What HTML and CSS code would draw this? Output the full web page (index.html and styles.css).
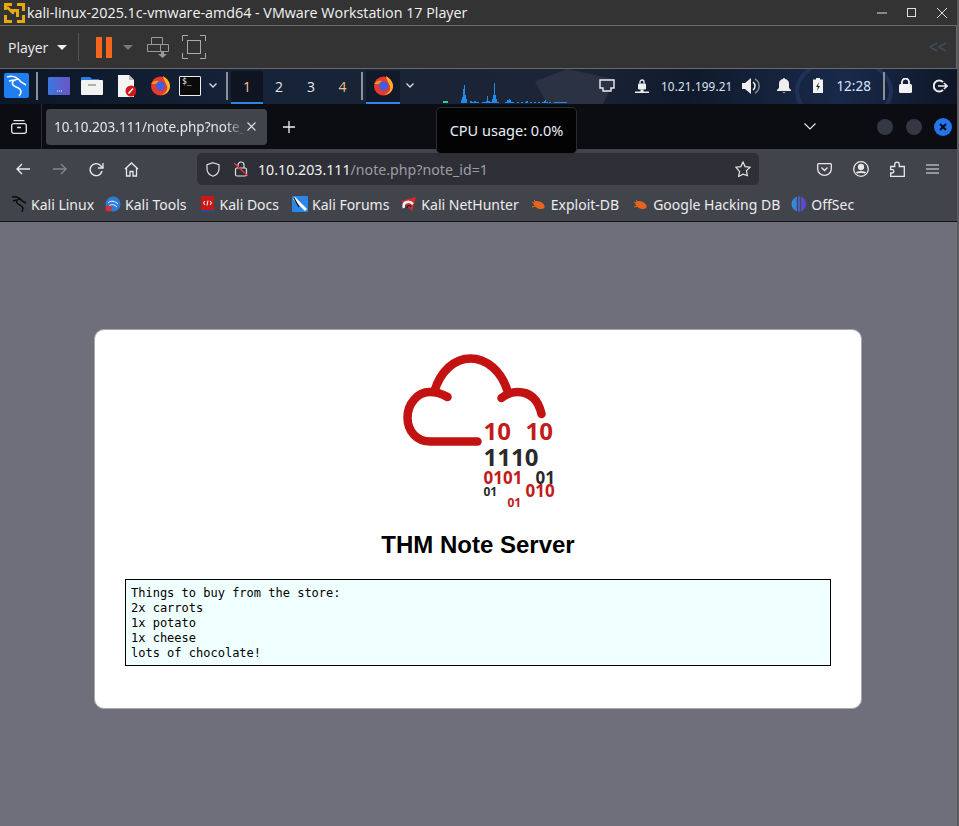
FILE: index.html
```html
<!DOCTYPE html>
<html lang="en">
<head>
<meta charset="utf-8">
<title>THM Note Server</title>
<link rel="stylesheet" href="styles.css">
</head>
<body>
<div class="shell">
  <header class="titlebar">
    <svg class="vm-logo" viewBox="0 0 24 22" width="24" height="22"><path d="M1 1h8v3H4v4H1zM14 1h8v8h-3V4h-5zM1 13h3v5h5v3H1zM8 7h8v8h-3v-5H8zM19 13h3v8h-8v-3h5z" fill="#e8a90c"/><path d="M4 5l6 6M10 8v4" stroke="#e8a90c" stroke-width="2.5"/></svg>
    <span class="title-text">kali-linux-2025.1c-vmware-amd64 - VMware Workstation 17 Player</span>
    <div class="win-controls">
      <svg width="10" height="2" viewBox="0 0 10 2"><path d="M0 1h10" stroke="#ddd"/></svg>
      <svg width="10" height="10" viewBox="0 0 10 10"><rect x=".5" y=".5" width="8" height="8" fill="none" stroke="#ddd"/></svg>
      <svg width="10" height="10" viewBox="0 0 10 10"><path d="M0 0l10 10M10 0L0 10" stroke="#ddd"/></svg>
    </div>
  </header>

  <div class="toolbar">
    <span class="player">Player</span>
    <span class="caret"></span>
    <span class="tb-sep"></span>
    <span class="pause"><i></i><i></i></span>
    <span class="caret caret-dim"></span>
    <svg class="tb-send" width="22" height="21" viewBox="0 0 22 21" fill="none" stroke="#999"><path d="M4.500 .5h11v7h-11zM.5 7.500h13v7H.5zM13.500 7.500h8v7h-8z"/><path d="M14 15v2h-3l4.500 4 4.500-4h-3v-2z" fill="#999" stroke="none"/></svg>
    <svg class="tb-full" width="24" height="24" viewBox="0 0 24 24" fill="none" stroke="#aaa"><path d="M.5 6V.5H6M18 .5h5.500V6M.5 18v5.500H6M18 23.500h5.500V18"/><rect x="5.500" y="5.500" width="13" height="13"/></svg>
    <svg class="tb-hide" width="18" height="10" viewBox="0 0 18 10" fill="none" stroke="#3d4c5c" stroke-width="1.500"><path d="M8 1L1 5l7 4M17 1l-7 4 7 4"/></svg>
  </div>

  <nav class="panel">
    <span class="kali-btn">
      <svg width="24" height="24" viewBox="0 0 24 24" fill="none" stroke="#fff" stroke-width="1.500"><path d="M3 4c6-2 11 1 14 5l5 3M15 6c-5 0-8 3-6 6 2 3 8 2 8 7 0 2-1 3-2 4M5 8c3-1 5-1 7-1"/></svg>
    </span>
    <span class="panel-sep sep-a"></span>
    <svg class="p-apps" width="22" height="18" viewBox="0 0 22 18"><defs><linearGradient id="ga" x1="0" x2="1"><stop offset="0" stop-color="#3b78e0"/><stop offset="1" stop-color="#6a55c4"/></linearGradient></defs><rect width="22" height="18" rx="1" fill="url(#ga)"/><path d="M9 14h1M11 14h1M13 14h1" stroke="#fff"/></svg>
    <svg class="p-files" width="22" height="19" viewBox="0 0 22 19"><path d="M0 2a1 1 0 011-1h8l2 2h7v3H0z" fill="#2a7de1"/><rect y="4" width="22" height="15" rx="1" fill="#f2f2f2"/><path d="M7 9h8" stroke="#999" stroke-width="1.500"/></svg>
    <svg class="p-doc" width="18" height="22" viewBox="0 0 18 22"><path d="M0 0h11l5 5v17H0z" fill="#f4f4f4"/><path d="M11 0l5 5h-5z" fill="#bbb"/><circle cx="13" cy="16" r="5.500" fill="#d01818"/><path d="M10.500 18.500l4.500-5" stroke="#fff" stroke-width="1.500"/></svg>
    <svg class="p-fox" width="21" height="21" viewBox="0 0 21 21"><use href="#fox"/></svg>
    <span class="p-term">$_</span>
    <svg class="chev p-chev1" width="8" height="5" viewBox="0 0 8 5"><path d="M.5.500L4 4 7.500.500" fill="none" stroke="#ddd" stroke-width="1.300"/></svg>
    <span class="panel-sep sep-b"></span>
    <span class="ws ws-on">1</span>
    <span class="ws">2</span>
    <span class="ws">3</span>
    <span class="ws ws-last">4</span>
    <span class="panel-sep sep-c"></span>
    <span class="task">
      <svg width="21" height="21" viewBox="0 0 21 21">
        <defs>
          <g id="fox">
            <circle cx="10.500" cy="11" r="9.500" fill="#e8392f"/>
            <path d="M13 1c5 3 7 7 7 10 0 5-4 9-9 9 5-2 7-5 6-9-1-3-3-5-4-10z" fill="#f9b42b"/>
            <path d="M1 9c2-3 5-4 8-3l-3 3z" fill="#f7922b"/>
            <circle cx="10.500" cy="11" r="4.500" fill="#3f5ee0"/>
          </g>
        </defs>
        <use href="#fox"/>
      </svg>
    </span>
    <svg class="chev p-chev2" width="8" height="5" viewBox="0 0 8 5"><path d="M.5.500L4 4 7.500.500" fill="none" stroke="#ddd" stroke-width="1.300"/></svg>
    <svg class="graph" width="150" height="20" viewBox="0 0 150 20" fill="#1f8cf0">
      <rect x="4" y="18" width="5" height="2" fill="#19d6a0"/>
      <path d="M22 20v-3h1v-3h1V6h1V2h1v10h1v4h1v4zM31 20v-2h2v1h2v-1h2v1h3v1zM43 20v-1h4v-1h1v-5h1v5h2v1h2v-3h1V12h1V0h1v12h1v4h1v3h2v1zM66 20v-1h2v-2h2v-1h1v1h1v2h3v1zM78 20v-1h2v1zM82 20v-1h2v1zM86 20v-1h1v-1h2v2zM91 20v-1h2v1zM95 20v-1h2v1zM99 20v-1h2v1zM103 20v-1h2v-1h1v-1h1v2h2v1zM110 20v-1h2v1zM115 20v-1h13v1z"/>
    </svg>
    <svg class="p-net" width="16" height="13" viewBox="0 0 16 13" fill="none" stroke="#eee" stroke-width="1.400"><path d="M1 1h14v8h-3v3H4V9H1z"/></svg>
    <svg class="p-lock" width="14" height="14" viewBox="0 0 14 14" fill="#eee"><rect x="3" y="4.500" width="8" height="6" rx="1"/><path d="M5 4.500V3a2 2 0 014 0v1.500" fill="none" stroke="#eee" stroke-width="1.300"/><path d="M0 12.500h5.500v-2h3v2H14v1.500H0z"/></svg>
    <span class="ip">10.21.199.21</span>
    <svg class="p-vol" width="18" height="16" viewBox="0 0 18 16"><path d="M0 5h3l6-5v16l-6-5H0z" fill="#eee"/><path d="M11 4a5 5 0 010 8" fill="none" stroke="#eee" stroke-width="1.500"/><path d="M13 1a8 8 0 010 14" fill="none" stroke="#888" stroke-width="1.500"/></svg>
    <svg class="p-bell" width="14" height="15" viewBox="0 0 14 15" fill="#eee"><path d="M7 0a1 1 0 011 1 5 5 0 014 5v4l2 2v1H0v-1l2-2V6a5 5 0 014-5 1 1 0 011-1zM5.500 14h3L7 15z"/></svg>
    <svg class="p-batt" width="10" height="15" viewBox="0 0 10 15"><path d="M3 0h4v1.500h3V15H0V1.500h3z" fill="#f2f2f2"/><path d="M6 4L3 9h2l-1 4 3-5H5z" fill="#222"/></svg>
    <span class="clock">12:28</span>
    <span class="panel-sep sep-d"></span>
    <svg class="p-lock2" width="13" height="15" viewBox="0 0 13 15"><rect y="6" width="13" height="9" rx="1.500" fill="#f2f2f2"/><path d="M3 6V4a3.500 3.500 0 017 0v2" fill="none" stroke="#f2f2f2" stroke-width="1.800"/></svg>
    <svg class="p-out" width="15" height="14" viewBox="0 0 15 14" fill="none" stroke="#eee" stroke-width="2"><path d="M10 3a5.500 5.500 0 100 8"/><path d="M5 7h9M11 4l3 3-3 3" stroke-width="1.600"/></svg>
  </nav>

  <div class="tabbar">
    <svg class="tab-view" width="16" height="14" viewBox="0 0 16 14" fill="none" stroke="#e6e6e6" stroke-width="1.300"><rect x=".7" y="3.700" width="14.600" height="9.600" rx="2"/><path d="M2.500.7h11M6 7.500h4"/></svg>
    <span class="tab-sep"></span>
    <div class="tab">
      <span class="tab-title">10.10.203.111/note.php?note_id=1</span>
      <svg width="9" height="9" viewBox="0 0 9 9"><path d="M.5.500l8 8M8.500.500l-8 8" stroke="#ddd" stroke-width="1.100"/></svg>
    </div>
    <svg class="tab-new" width="12" height="12" viewBox="0 0 12 12"><path d="M6 0v12M0 6h12" stroke="#f0f0f0" stroke-width="1.300"/></svg>
    <svg class="tab-list" width="12" height="7" viewBox="0 0 12 7"><path d="M.5.500L6 6 11.500.500" fill="none" stroke="#e6e6e6" stroke-width="1.200"/></svg>
    <span class="wbtn wbtn-min"></span>
    <span class="wbtn wbtn-max"></span>
    <span class="wbtn wbtn-close"><svg width="8" height="8" viewBox="0 0 8 8"><path d="M1 1l6 6M7 1L1 7" stroke="#0b0c10" stroke-width="2"/></svg></span>
  </div>

  <div class="navbar">
    <svg class="nav-back" width="14" height="12" viewBox="0 0 14 12" fill="none" stroke="#e8e8e8" stroke-width="1.400"><path d="M14 6H1M6 1L1 6l5 5"/></svg>
    <svg class="nav-fwd" width="14" height="12" viewBox="0 0 14 12" fill="none" stroke="#85878c" stroke-width="1.400"><path d="M0 6h13M8 1l5 5-5 5"/></svg>
    <svg class="nav-reload" width="15" height="15" viewBox="0 0 15 15" fill="none" stroke="#e8e8e8" stroke-width="1.400"><path d="M13 9a6 6 0 11-1.500-5.500L14 6"/><path d="M14 1v5H9" stroke-width="1.300"/></svg>
    <svg class="nav-home" width="15" height="15" viewBox="0 0 15 15" fill="none" stroke="#e8e8e8" stroke-width="1.300"><path d="M1 7l6.500-6L14 7M2.500 6v8h3.500V9.500h3V14h3.500V6"/></svg>
    <div class="urlbar">
      <svg class="url-shield" width="14" height="15" viewBox="0 0 14 15" fill="none" stroke="#e0e0e0" stroke-width="1.200"><path d="M7 .7l6 2v4c0 4-3 6.500-6 7.500C4 13.200 1 10.700 1 6.700v-4z"/></svg>
      <svg class="url-lock" width="14" height="16" viewBox="0 0 14 16" fill="none" stroke="#e0e0e0" stroke-width="1.200"><rect x="1.500" y="7" width="11" height="8" rx="1.500"/><path d="M4 7V4a3 3 0 016 0v3"/><path d="M0 2l14 13" stroke="#e0323c" stroke-width="1.400"/></svg>
      <span class="url"><b>10.10.203.111</b>/note.php?note_id=1</span>
      <svg class="url-star" width="16" height="16" viewBox="0 0 16 16" fill="none" stroke="#e6e6e6" stroke-width="1.200"><path d="M8 1l2.100 4.600 5 .6-3.700 3.400 1 4.900L8 13.100l-4.400 2.400 1-4.900L.9 6.200l5-.6z"/></svg>
    </div>
    <svg class="nav-pocket" width="15" height="13" viewBox="0 0 15 13" fill="none" stroke="#e8e8e8" stroke-width="1.300"><path d="M1.500.7h12a.8.800 0 01.8.800V6a6.800 6.300 0 01-13.600 0V1.500a.8.800 0 01.8-.800z"/><path d="M4.500 4.500l3 3 3-3"/></svg>
    <svg class="nav-user" width="16" height="16" viewBox="0 0 16 16" fill="none" stroke="#e8e8e8" stroke-width="1.300"><circle cx="8" cy="8" r="7.300"/><circle cx="8" cy="6" r="2.500" fill="#e8e8e8"/><path d="M3.500 12c1-1.500 8-1.500 9 0" stroke-width="2"/></svg>
    <svg class="nav-ext" width="15" height="16" viewBox="0 0 15 16" fill="none" stroke="#e8e8e8" stroke-width="1.300"><path d="M.7 5.500h4v-2a2.300 2.300 0 014.600 0v2h5v9.800H.7V12h1.500a1.700 1.700 0 000-3.400H.7z"/></svg>
    <svg class="nav-menu" width="13" height="10" viewBox="0 0 13 10" stroke="#e8e8e8" stroke-width="1.200"><path d="M0 1h13M0 5h13M0 9h13"/></svg>
  </div>

  <div class="bookmarks">
    <span class="bm">
      <svg width="16" height="16" viewBox="0 0 16 16" fill="none" stroke="#0c0c0c" stroke-width="1.400"><path d="M1 1c5-1 8 1 10 4l4 2M9 3C6 3 5 5 6 7s5 2 6 5c0 2-1 3-1 4M2 5c2-1 3-1 5-1"/></svg>Kali Linux</span>
    <span class="bm bm-tools">
      <svg width="16" height="16" viewBox="0 0 16 16"><circle cx="8" cy="8" r="7.500" fill="#2f7bd8"/><path d="M3 7c3-3 7-2 10 1M4 10c2-2 5-2 8 1" fill="none" stroke="#fff"/><circle cx="3.500" cy="12.500" r="3" fill="#d83030"/></svg>Kali Tools</span>
    <span class="bm bm-docs">
      <svg width="16" height="16" viewBox="0 0 16 16"><rect x="1" y="0" width="13" height="14" fill="#c91818"/><rect x="1" y="14" width="13" height="2" fill="#2d4b8c"/><path d="M5 5L3.500 7 5 9M10 5l1.500 2L10 9M8 4.500l-1 5" fill="none" stroke="#fff"/></svg>Kali Docs</span>
    <span class="bm bm-forums">
      <svg width="16" height="16" viewBox="0 0 16 16"><rect width="16" height="16" rx="1" fill="#2a86e8"/><path d="M2 2l12 12" stroke="#fff" stroke-width="3"/><path d="M2 2l5 9" stroke="#111" stroke-width="1.200"/></svg>Kali Forums</span>
    <span class="bm">
      <svg width="16" height="16" viewBox="0 0 16 16"><path d="M0 5l15-4-4 14z" fill="#d62a30"/><path d="M3 12c-2-6 5-8 9-4" fill="none" stroke="#f2f2f2" stroke-width="2.500"/><path d="M6 12c0-3 3-3 4-1" fill="none" stroke="#222" stroke-width="1.500"/></svg>Kali NetHunter</span>
    <span class="bm">
      <svg width="16" height="16" viewBox="0 0 16 16" fill="#e8641c"><ellipse cx="8" cy="9" rx="6" ry="3.500" transform="rotate(25 8 9)"/><path d="M1 6l3 2M3 4l3 3M1 11l4-1" stroke="#e8641c"/></svg>Exploit-DB</span>
    <span class="bm bm-google">
      <svg width="16" height="16" viewBox="0 0 16 16" fill="#e8641c"><ellipse cx="8" cy="9" rx="6" ry="3.500" transform="rotate(25 8 9)"/><path d="M1 6l3 2M3 4l3 3M1 11l4-1" stroke="#e8641c"/></svg>Google Hacking DB</span>
    <span class="bm bm-offsec">
      <svg width="16" height="16" viewBox="0 0 16 16"><defs><linearGradient id="go" x1="0" x2="1"><stop offset="0" stop-color="#2b9ad8"/><stop offset="1" stop-color="#6a35c8"/></linearGradient></defs><circle cx="8" cy="8" r="7.500" fill="url(#go)"/><path d="M6.500 1v14M9.500 1v14" stroke="#45484f" stroke-width="1.300"/></svg>OffSec</span>
  </div>

  <main class="page">
    <section class="card">
      <svg class="logo" width="180" height="180" viewBox="-2.500 0 180 180">
        <path class="cloud" d="M87 100.500H40C26 100.500 17 90 17 76.500S27 51 39 51c7 0 13 2 18 5M44 50C50 30 64 17.500 80 17.500S111 30 117 50M111 57c5-4 10-6 16-6 14 0 21 9 24 22"/>
        <text class="d-red" x="93" y="98.500" font-size="24">10</text>
        <text class="d-red" x="135" y="98.500" font-size="24">10</text>
        <text class="d-dark" x="93" y="124.500" font-size="24">1110</text>
        <text class="d-red" x="93" y="142.500" font-size="17">0101</text>
        <text class="d-dark" x="145" y="142.500" font-size="17">01</text>
        <text class="d-dark" x="93" y="155" font-size="12">01</text>
        <text class="d-red" x="135" y="156" font-size="17">010</text>
        <text class="d-red" x="117" y="166" font-size="12">01</text>
      </svg>
      <h1 class="heading">THM Note Server</h1>
      <pre class="note">Things to buy from the store:
2x carrots
1x potato
1x cheese
lots of chocolate!</pre>
    </section>
  </main>

  <div class="tooltip">CPU usage: 0.0%</div>
</div>
</body>
</html>
```

FILE: styles.css
```css
* { box-sizing: border-box; }
html, body { margin: 0; padding: 0; height: 100%; overflow: hidden; }
body { font-family: "Noto Sans", sans-serif; background: #6f6e7b; }
.shell { position: relative; display: flex; flex-direction: column; width: 959px; height: 826px; border-right: 2px solid #5a5a5e; }
svg { display: block; flex: none; }

.titlebar { display: flex; align-items: center; height: 26px; padding-left: 3px; background: #333; border-bottom: 1px solid #6a6a6a; color: #f2f2f2; }
.vm-logo { margin-right: 1px; }
.title-text { font-family: "Open Sans", sans-serif; font-size: 14.300px; white-space: nowrap; margin-left: -1px; }
.win-controls { display: flex; align-items: center; gap: 20px; margin-left: auto; padding-right: 10px; }

.toolbar { display: flex; align-items: center; height: 43px; background: #333; border-bottom: 1px solid #6a6a6a; border-right: 1px solid #6a6a6a; }
.player { margin-left: 8px; font-family: "Open Sans", sans-serif; font-size: 14px; color: #eee; }
.caret { width: 0; height: 0; margin-left: 9px; border: 5px solid transparent; border-top: 5px solid #eee; border-bottom: 0; }
.caret-dim { margin-left: 11px; border-top-color: #777; }
.tb-sep { width: 1px; height: 28px; margin-left: 11px; background: #555; }
.pause { display: flex; gap: 4px; margin-left: 17px; }
.pause i { display: block; width: 6px; height: 21px; background: #f4661b; }
.tb-send { margin-left: 14px; }
.tb-full { margin-left: 13px; }
.tb-hide { margin-left: auto; margin-right: 9px; }

.panel { position: relative; z-index: 0; overflow: hidden; display: flex; align-items: center; height: 35px; padding-bottom: 2px; background: linear-gradient(100deg, #0b1626 0%, #152238 25%, #1a2436 45%, #1c2536 60%, #101a2c 72%, #18294a 88%, #0e1626 100%); }
.panel::before { content: ""; position: absolute; z-index: -1; left: 535px; top: 0; width: 80px; height: 35px; background: #2b3244; clip-path: polygon(0 35%, 40% 0, 100% 30%, 85% 100%, 15% 100%); }
.panel::after { content: ""; position: absolute; z-index: -1; left: 795px; top: -12px; width: 90px; height: 60px; border: 4px solid #1f3156; border-radius: 50%; }
.kali-btn { display: flex; width: 25px; height: 25px; margin-left: 4px; border-radius: 2px; background: #1f7ff0; }
.panel-sep { width: 2px; height: 28px; background: #8a8f98; }
.sep-a { margin-left: 7px; }
.p-apps { margin-left: 10px; }
.p-files { margin-left: 11px; }
.p-doc { margin-left: 15px; }
.p-fox { margin-left: 14px; }
.p-term { width: 22px; height: 20px; margin-left: 8px; padding-left: 2px; border: 1px solid #eee; border-radius: 1px; background: #0a0a0a; color: #eee; font-family: "DejaVu Sans Mono", monospace; font-size: 8px; line-height: 10px; }
.p-chev1 { margin-left: 8px; }
.sep-b { margin-left: 9px; }
.ws { align-self: flex-end; width: 32px; height: 33px; margin-bottom: -2px; font-size: 14px; line-height: 31px; text-align: center; color: #e8e8e8; font-family: "Open Sans", sans-serif; }
.ws-on { margin-left: 3px; border-bottom: 2px solid #2f86e8; background: #0e1420; color: #f0c8a0; }
.ws-last { width: 31px; color: #f0c088; }
.sep-c { margin-left: 3px; }
.task { align-self: flex-end; display: flex; justify-content: center; align-items: center; width: 34px; height: 33px; margin: 0 0 -2px 3px; padding-bottom: 2px; border-bottom: 2px solid #2f86e8; background: #111a2a; }
.p-chev2 { margin-left: 6px; }
.graph { align-self: flex-start; margin: 14px 0 0 25px; }
.p-net { margin-left: 10px; }
.p-lock { margin-left: 20px; }
.ip { margin-left: 12px; font-size: 11.700px; color: #d8e8f0; white-space: nowrap; letter-spacing: .15px; }
.p-vol { margin-left: 10px; }
.p-bell { margin-left: 17px; }
.p-batt { margin-left: 22px; }
.clock { margin-left: 13px; font-size: 13.500px; color: #d8e8f8; }
.sep-d { margin-left: 12px; }
.p-lock2 { margin-left: 14px; }
.p-out { margin-left: 21px; }

.tabbar { position: relative; display: flex; align-items: center; height: 45px; background: #0c0d12; }
.tab-view { margin-left: 11px; }
.tab-sep { width: 1px; height: 45px; margin-left: 14px; background: #2c2d33; }
.tab { display: flex; align-items: center; width: 221px; height: 36px; margin-left: 4px; padding: 0 11px 0 8px; border-radius: 4px; background: #42444c; }
.tab-title { overflow: hidden; width: 191px; margin-right: 2px; font-size: 13.500px; color: #e6e6e6; white-space: nowrap; -webkit-mask-image: linear-gradient(90deg, #000 90%, transparent); mask-image: linear-gradient(90deg, #000 90%, transparent); }
.tab-new { margin-left: 16px; }
.tab-list { margin-left: 509px; }
.wbtn { display: flex; align-items: center; justify-content: center; width: 16px; height: 16px; border-radius: 50%; background: #343844; }
.wbtn-min { margin-left: 61px; }
.wbtn-max { margin-left: 13px; }
.wbtn-close { width: 18px; height: 18px; margin-left: 12px; background: #2474ee; }

.navbar { display: flex; align-items: center; height: 40px; background: #42444c; }
.nav-back { margin-left: 16px; }
.nav-fwd { margin-left: 23px; }
.nav-reload { margin-left: 22px; }
.nav-home { margin-left: 20px; }
.urlbar { display: flex; align-items: center; width: 562px; height: 32px; margin-left: 58px; padding: 0 8px; border-radius: 5px; background: #2f3037; }
.url-shield { margin-left: 1px; }
.url-lock { margin-left: 14px; }
.url { margin-left: 10px; font-size: 14.200px; color: #9c9da2; white-space: nowrap; }
.url b { font-weight: 400; color: #f0f0f0; }
.url-star { margin-left: auto; }
.nav-pocket { margin-left: 58px; }
.nav-user { margin-left: 21px; }
.nav-ext { margin-left: 21px; }
.nav-menu { margin-left: 21px; }

.bookmarks { display: flex; align-items: center; height: 33px; padding: 0 0 2px 11px; gap: 12px; background: #42444c; border-bottom: 1px solid #111; }
.bm { display: flex; align-items: center; gap: 4px; font-size: 14px; color: #ececec; white-space: nowrap; }
.bm-tools { margin-left: -1px; }
.bm-docs { margin-left: 1px; }
.bm-forums { margin-left: 1px; }
.bm-google { margin-left: 2px; }
.bm-offsec { margin-left: -1px; }

.page { display: flex; justify-content: center; flex: 1; padding: 107px 1px 0 0; background: #6f6e7b; }
.card { display: flex; flex-direction: column; align-items: center; width: 768px; height: 380px; padding: 10px 30px 0; border: 1px solid #a8a8ae; border-radius: 10px; background: #fff; }
.logo { margin-top: 1px; }
.cloud { fill: none; stroke: #c21212; stroke-width: 8.500; stroke-linecap: round; }
.d-red, .d-dark { font-family: "Open Sans", "Liberation Sans", sans-serif; font-weight: 700; }
.d-red { fill: #c31a1a; }
.d-dark { fill: #2a2a2a; }
.heading { margin: 10px 0 0; font-family: "Liberation Sans", Arial, sans-serif; font-size: 24px; font-weight: 700; color: #000; line-height: 28px; }
.note { width: 706px; height: 87px; margin: 20px 0 0; padding: 6px 5px 0; border: 1px solid #000; background: #f0ffff; font-family: "DejaVu Sans Mono", monospace; font-size: 12px; line-height: 15px; color: #000; }

.tooltip { position: absolute; left: 436px; top: 107px; width: 141px; height: 47px; border: 1px solid #2c2d33; border-radius: 5px; background: #030303; color: #e8f0f8; font-size: 14.500px; line-height: 45px; text-align: center; }
```
